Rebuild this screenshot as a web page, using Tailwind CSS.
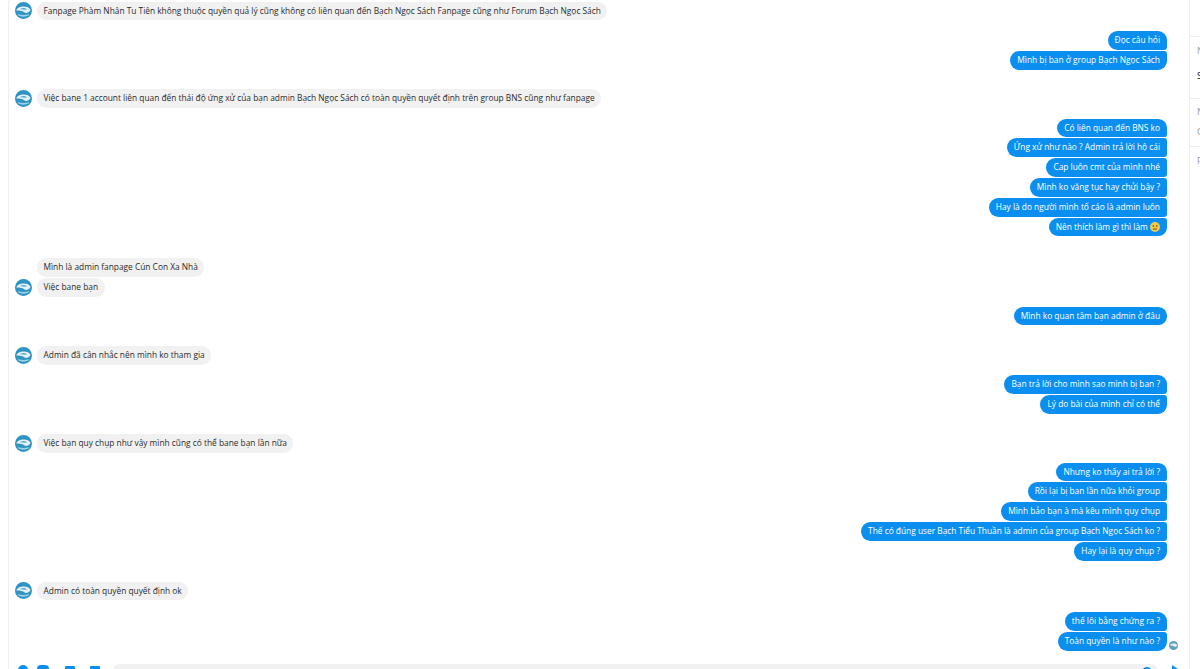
<!DOCTYPE html>
<html lang="vi">
<head>
  <meta charset="UTF-8">
  <title>Messenger</title>
  <script src="https://cdn.jsdelivr.net/npm/@tailwindcss/browser@4"></script>
</head>
<body class="bg-white overflow-hidden font-['Open_Sans',sans-serif] text-[8.35px] leading-[18.8px]">
  <div class="flex h-[669px] w-[1200px] overflow-hidden">
    <main class="w-[1181px] ml-[8px] border-l border-[#eeeeee] flex flex-col shrink-0">
      <div id="chat" class="h-[662px] overflow-hidden flex flex-col pt-px pl-[6px] pr-[22px]"></div>
      <!-- thanh nhập tin nhắn -->
      <div class="h-[7px] flex items-start pl-[9px] overflow-hidden">
        <svg width="10" height="10" viewBox="0 0 10 10" class="mt-[3px]"><circle cx="5" cy="5" r="5" fill="#0a8ff0"/></svg>
        <svg width="12" height="10" viewBox="0 0 12 10" class="mt-[3px] ml-[9px]"><rect width="12" height="10" rx="4" fill="#0a8ff0"/></svg>
        <svg width="10" height="10" viewBox="0 0 10 10" class="mt-[4px] ml-[16px]"><rect width="10" height="10" rx="1" fill="#0a8ff0"/></svg>
        <svg width="10" height="10" viewBox="0 0 10 10" class="mt-[4px] ml-[15px]"><rect width="10" height="10" rx="1" fill="#0a8ff0"/></svg>
        <div class="ml-[13px] w-[1044px] h-[12px] mt-[2px] rounded-full bg-[#f1f1f1] flex justify-end pr-[5px]">
          <svg width="10" height="10" viewBox="0 0 10 10" class="mt-[3px]"><circle cx="5" cy="5" r="5" fill="#0a8ff0"/></svg>
        </div>
        <svg width="8" height="8" viewBox="0 0 8 8" class="mt-[3px] ml-[14px]"><path d="M1 0l6 4l-6 4z" fill="#0a8ff0"/></svg>
      </div>
    </main>
    <aside class="w-[11px] shrink-0 border-l border-[#eeeeee] text-[9px] leading-[14px] text-[#9a9a9a] whitespace-nowrap overflow-hidden">
      <div class="h-[36px]"></div>
      <div class="h-[62px] pl-[7px] border-t border-[#eeeeee] pt-[7px]">N<div class="text-[#111111] mt-[11px]">S</div></div>
      <div class="h-[48px] pl-[7px] border-t border-[#eeeeee] pt-[6px]">N<div class="mt-[6px]">C</div></div>
      <div class="pl-[7px] border-t border-[#eeeeee] pt-[7px]">P</div>
    </aside>
  </div>
  <script>
    // [ben, khoang cach phia tren, noi dung, vi tri trong nhom]
    const avatar = '<svg width="17" height="17" viewBox="0 0 18 18" class="shrink-0"><circle cx="9" cy="9" r="9" fill="#2f93c4"/><path d="M1.5 9c1-5 13-6 15-.5c-2 3-4 3.500-6 3c-1-2-5-3-9-2.500z" fill="#e6f2f7"/><path d="M5 7.500c3-1.500 6-1 8 .5c-3 0-5 0-8-.5z" fill="#2f93c4"/><path d="M3 13c4 1 8 1 12 0v1c-4 2-8 2-12 0z" fill="#9fd0e6"/></svg>';
    const seen = '<svg width="9" height="9" viewBox="0 0 18 18" class="absolute right-[-11px] bottom-[1px]"><circle cx="9" cy="9" r="9" fill="#5f9fbf"/><path d="M1.500 9c1-5 13-6 15-.5c-2 3-4 3.500-6 3c-1-2-5-3-9-2.500z" fill="#e6f2f7"/></svg>';
    const face = ' <svg width="10" height="10" viewBox="0 0 10 10" class="inline-block align-[-2px]"><circle cx="5" cy="5" r="5" fill="#f2c94c"/><circle cx="3.300" cy="4" r=".8" fill="#5a4510"/><circle cx="6.700" cy="4" r=".8" fill="#5a4510"/><path d="M3 7h4" stroke="#5a4510" stroke-width=".9"/></svg>';
    const rows = [
      ['l', 0, 'Fanpage Phàm Nhân Tu Tiên không thuộc quyền quả lý cũng không có liên quan đến Bạch Ngọc Sách Fanpage cũng như Forum Bạch Ngọc Sách'],
      ['r', 10, 'Đọc câu hỏi', 'first'],
      ['r', 0, 'Mình bị ban ở group Bạch Ngọc Sách', 'last'],
      ['l', 18, 'Việc bane 1 account liên quan đến thái độ ứng xử của bạn admin Bạch Ngọc Sách có toàn quyền quyết định trên group BNS cũng như fanpage'],
      ['r', 10, 'Có liên quan đến BNS ko', 'first'],
      ['r', 0, 'Ứng xử như nào ? Admin trả lời hộ cái'],
      ['r', 0, 'Cap luôn cmt của mình nhé'],
      ['r', 0, 'Mình ko văng tục hay chửi bậy ?'],
      ['r', 0, 'Hay là do người mình tố cáo là admin luôn'],
      ['r', 0, 'Nên thích làm gì thì làm' + face, 'last'],
      ['l', 20.500, 'Mình là admin fanpage Cún Con Xa Nhà', 'noavatar'],
      ['l', 0, 'Việc bane bạn'],
      ['r', 9, 'Mình ko quan tâm bạn admin ở đâu', 'only'],
      ['l', 20, 'Admin đã cân nhắc nên mình ko tham gia'],
      ['r', 9, 'Bạn trả lời cho mình sao mình bị ban ?', 'first'],
      ['r', 0, 'Lý do bài của mình chỉ có thể', 'last'],
      ['l', 19, 'Việc bạn quy chụp như vậy mình cũng có thể bane bạn lần nữa'],
      ['r', 9, 'Nhưng ko thấy ai trả lời ?', 'first'],
      ['r', 0, 'Rồi lại bị ban lần nữa khỏi group'],
      ['r', 0, 'Mình bảo bạn à mà kêu mình quy chụp'],
      ['r', 0, 'Thế có đúng user Bạch Tiểu Thuần là admin của group Bạch Ngọc Sách ko ?'],
      ['r', 0, 'Hay lại là quy chụp ?', 'last'],
      ['l', 20, 'Admin có toàn quyền quyết định ok'],
      ['r', 11, 'thế lôi bằng chứng ra ?', 'first'],
      ['r', 0, 'Toàn quyền là như nào ?', 'seen'],
    ];
    const corner = { first: 'rounded-tr-[9px] rounded-br-[3px]', last: 'rounded-tr-[3px] rounded-br-[9px]', seen: 'rounded-tr-[3px] rounded-br-[9px]', only: 'rounded-r-[9px]' };
    document.getElementById('chat').innerHTML = rows.map(([side, gap, text, kind]) => {
      if (side === 'l') {
        return `<div class="flex items-center h-[19.8px] shrink-0 gap-[5px]" style="margin-top:${gap}px">` +
          (kind === 'noavatar' ? '<span class="w-[17px] shrink-0"></span>' : avatar) +
          `<span class="h-[18.8px] px-[6.5px] rounded-[9.4px] bg-[#f1f1f1] text-[#2b2b2b] whitespace-nowrap">${text}</span></div>`;
      }
      return `<div class="flex justify-end items-center h-[19.8px] shrink-0" style="margin-top:${gap}px">` +
        `<span class="relative h-[18.8px] px-[7px] rounded-l-[9.4px] ${corner[kind] || 'rounded-r-[3px]'} bg-[#0a8ff0] text-white whitespace-nowrap">${text}${kind === 'seen' ? seen : ''}</span></div>`;
    }).join('');
  </script>
</body>
</html>
